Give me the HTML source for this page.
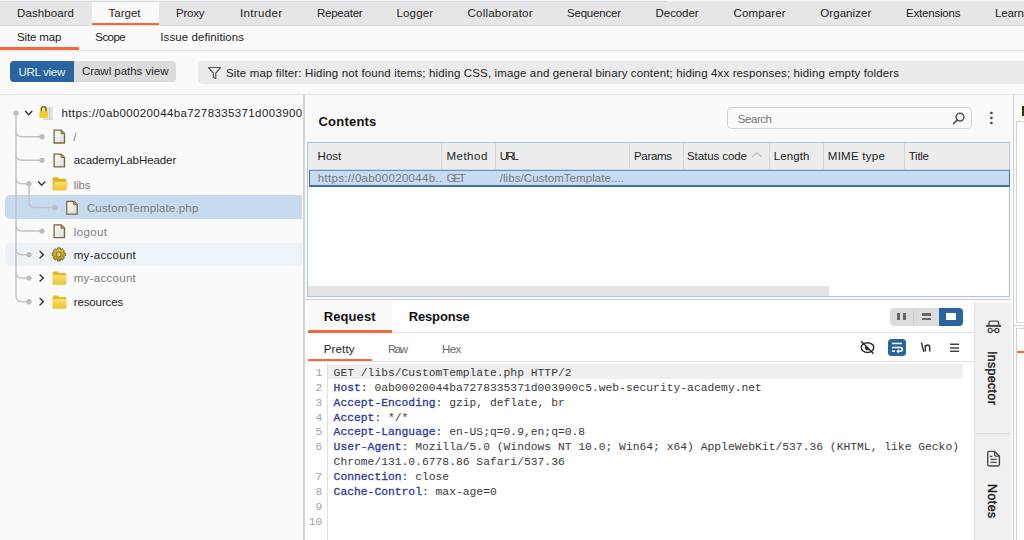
<!DOCTYPE html>
<html><head><meta charset="utf-8"><style>
html,body{margin:0;padding:0;width:1024px;height:540px;overflow:hidden;background:#fafafa;position:relative}
body>div, body>span, body>svg{position:absolute}
div{position:absolute}
.t{position:absolute;white-space:nowrap;font-family:"Liberation Sans",sans-serif}
.m{position:absolute;white-space:pre;font-family:"Liberation Mono",monospace;font-size:11.33px;line-height:11.33px}
</style></head><body>
<div style="left:0px;top:0px;width:1024px;height:25px;background:#e6e6e6"></div>
<div style="left:0px;top:0px;width:1024px;height:1px;background:#f3f4f6"></div>
<div style="left:0px;top:1px;width:667px;height:1px;background:#d6dde7"></div>
<div style="left:667px;top:1px;width:357px;height:1px;background:#eeeff0"></div>
<div style="left:92px;top:2px;width:67px;height:23px;background:#fafafa"></div>
<div style="left:92px;top:22.5px;width:67px;height:2px;background:#f8693a"></div>
<div style="left:0px;top:25px;width:1024px;height:1px;background:#dedede"></div>
<span class="t" style="left:17.00px;top:8.27px;font-size:11.5px;line-height:11.5px;color:#222;letter-spacing:0.094px;">Dashboard</span>
<span class="t" style="left:108.50px;top:8.27px;font-size:11.5px;line-height:11.5px;color:#222;letter-spacing:0.010px;">Target</span>
<span class="t" style="left:176.00px;top:8.27px;font-size:11.5px;line-height:11.5px;color:#222;letter-spacing:-0.250px;">Proxy</span>
<span class="t" style="left:240.00px;top:8.27px;font-size:11.5px;line-height:11.5px;color:#222;letter-spacing:0.339px;">Intruder</span>
<span class="t" style="left:317.00px;top:8.27px;font-size:11.5px;line-height:11.5px;color:#222;letter-spacing:-0.243px;">Repeater</span>
<span class="t" style="left:396.50px;top:8.27px;font-size:11.5px;line-height:11.5px;color:#222;letter-spacing:0.160px;">Logger</span>
<span class="t" style="left:467.50px;top:8.27px;font-size:11.5px;line-height:11.5px;color:#222;letter-spacing:0.214px;">Collaborator</span>
<span class="t" style="left:567.00px;top:8.27px;font-size:11.5px;line-height:11.5px;color:#222;letter-spacing:-0.203px;">Sequencer</span>
<span class="t" style="left:655.60px;top:8.27px;font-size:11.5px;line-height:11.5px;color:#222;letter-spacing:-0.079px;">Decoder</span>
<span class="t" style="left:733.50px;top:8.27px;font-size:11.5px;line-height:11.5px;color:#222;letter-spacing:0.125px;">Comparer</span>
<span class="t" style="left:820.30px;top:8.27px;font-size:11.5px;line-height:11.5px;color:#222;letter-spacing:0.062px;">Organizer</span>
<span class="t" style="left:906.00px;top:8.27px;font-size:11.5px;line-height:11.5px;color:#222;letter-spacing:-0.206px;">Extensions</span>
<span class="t" style="left:995.00px;top:8.27px;font-size:11.5px;line-height:11.5px;color:#222;letter-spacing:-0.106px;">Learn</span>
<div style="left:0px;top:26px;width:1024px;height:69px;background:#fafafa"></div>
<div style="left:0px;top:50px;width:1024px;height:1px;background:#e2e4e4"></div>
<div style="left:0px;top:47.2px;width:79px;height:2.6px;background:#f8693a"></div>
<span class="t" style="left:17.00px;top:32.27px;font-size:11.5px;line-height:11.5px;color:#222;letter-spacing:-0.139px;">Site map</span>
<span class="t" style="left:95.30px;top:32.27px;font-size:11.5px;line-height:11.5px;color:#222;letter-spacing:-0.575px;">Scope</span>
<span class="t" style="left:160.30px;top:32.27px;font-size:11.5px;line-height:11.5px;color:#222;letter-spacing:0.080px;">Issue definitions</span>
<div style="left:10.2px;top:61px;width:166.3px;height:20.5px;background:#dcdcdc;border-radius:4px"></div>
<div style="left:10.2px;top:61px;width:63.8px;height:20.5px;background:#2a64a0;border-radius:4px 0 0 4px"></div>
<span class="t" style="left:18.50px;top:66.57px;font-size:11.5px;line-height:11.5px;color:#eef2f7;letter-spacing:-0.296px;">URL view</span>
<span class="t" style="left:81.90px;top:66.27px;font-size:11.5px;line-height:11.5px;color:#2a2a2a;letter-spacing:-0.025px;">Crawl paths view</span>
<div style="left:198px;top:61px;width:826px;height:22.5px;background:#ebebeb;border-radius:5px 0 0 5px"></div>
<svg style="position:absolute;left:207px;top:66px" width="16" height="14" viewBox="0 0 16 14"><path d="M1.5 1.5 H13.5 L8.8 7.2 V12.5 L6.4 11.2 V7.2 Z" fill="none" stroke="#555" stroke-width="1.2" stroke-linejoin="round"/></svg>
<span class="t" style="left:226.00px;top:68.27px;font-size:11.5px;line-height:11.5px;color:#222;letter-spacing:0.134px;">Site map filter: Hiding not found items; hiding CSS, image and general binary content; hiding 4xx responses; hiding empty folders</span>
<div style="left:0px;top:94px;width:1024px;height:1px;background:#e4e4e4"></div>
<div style="left:0px;top:95px;width:303px;height:445px;background:#fafafa"></div>
<div style="left:5px;top:195px;width:296.7px;height:24px;background:#c8daf0;border-radius:5px 0 0 5px"></div>
<div style="left:5px;top:243px;width:296.7px;height:22.5px;background:#eef3fa;border-radius:5px 0 0 5px"></div>
<svg style="position:absolute;left:0;top:0" width="303" height="540" viewBox="0 0 303 540"><defs><linearGradient id="fg" x1="0" y1="0" x2="1" y2="1"><stop offset="0" stop-color="#ffffff"/><stop offset="1" stop-color="#d8d8d8"/></linearGradient><linearGradient id="fo" x1="0" y1="0" x2="0" y2="1"><stop offset="0" stop-color="#fbe07a"/><stop offset="1" stop-color="#eec22a"/></linearGradient><linearGradient id="gg" x1="0" y1="0" x2="0" y2="1"><stop offset="0" stop-color="#dcc458"/><stop offset="1" stop-color="#a88c22"/></linearGradient></defs><path d="M16 113 V295.7 Q16 301.7 22 301.7 H29" fill="none" stroke="#c3c3c3" stroke-width="1.5"/><path d="M16 130.7 Q16 136.7 22 136.7 H42" fill="none" stroke="#c3c3c3" stroke-width="1.5"/><path d="M16 154.3 Q16 160.3 22 160.3 H42" fill="none" stroke="#c3c3c3" stroke-width="1.5"/><path d="M16 225.1 Q16 231.1 22 231.1 H42" fill="none" stroke="#c3c3c3" stroke-width="1.5"/><path d="M16 177.7 Q16 183.7 22 183.7 H29" fill="none" stroke="#c3c3c3" stroke-width="1.5"/><path d="M16 248.7 Q16 254.7 22 254.7 H29" fill="none" stroke="#c3c3c3" stroke-width="1.5"/><path d="M16 272 Q16 278 22 278 H29" fill="none" stroke="#c3c3c3" stroke-width="1.5"/><path d="M29 183.7 V201.6 Q29 207.6 35 207.6 H54.7" fill="none" stroke="#c3c3c3" stroke-width="1.5"/><circle cx="16" cy="113" r="2.6" fill="#bdbdbd"/><circle cx="42" cy="136.7" r="2.6" fill="#bdbdbd"/><circle cx="42" cy="160.3" r="2.6" fill="#bdbdbd"/><circle cx="29" cy="183.7" r="2.6" fill="#bdbdbd"/><circle cx="54.7" cy="207.6" r="2.6" fill="#bdbdbd"/><circle cx="42" cy="231.1" r="2.6" fill="#bdbdbd"/><circle cx="29" cy="254.7" r="2.6" fill="#bdbdbd"/><circle cx="29" cy="278" r="2.6" fill="#bdbdbd"/><circle cx="29" cy="301.7" r="2.6" fill="#bdbdbd"/><path d="M25.2 111 L28.7 114.8 L32.2 111" fill="none" stroke="#333" stroke-width="1.4"/><path d="M38.2 181.5 L41.7 185.3 L45.2 181.5" fill="none" stroke="#333" stroke-width="1.4"/><path d="M39.6 251.1 L43.4 254.7 L39.6 258.3" fill="none" stroke="#333" stroke-width="1.4"/><path d="M39.6 274.4 L43.4 278 L39.6 281.6" fill="none" stroke="#333" stroke-width="1.4"/><path d="M39.6 298.09999999999997 L43.4 301.7 L39.6 305.3" fill="none" stroke="#333" stroke-width="1.4"/><g transform="translate(53.3,129.4)"><defs></defs><path d="M0.8 0.8 H8 L11.2 4 V13.6 H0.8 Z" fill="url(#fg)" stroke="#7a6a3a" stroke-width="1.3" stroke-linejoin="miter"/><path d="M7.8 0.8 V4.2 H11.2" fill="#b8a060" stroke="#7a6a3a" stroke-width="1"/></g><g transform="translate(53.3,153.3)"><defs></defs><path d="M0.8 0.8 H8 L11.2 4 V13.6 H0.8 Z" fill="url(#fg)" stroke="#7a6a3a" stroke-width="1.3" stroke-linejoin="miter"/><path d="M7.8 0.8 V4.2 H11.2" fill="#b8a060" stroke="#7a6a3a" stroke-width="1"/></g><g transform="translate(52.2,176.7)"><path d="M0.5 1.5 Q0.5 0.5 1.5 0.5 H5.5 L7 2 H13 Q14 2 14 3 V13.5 H0.5 Z" fill="#e0b020"/><path d="M2.5 5 H16 L14 13.5 H0.5 Z" fill="url(#fo)"/></g><g transform="translate(66,200.6)"><defs></defs><path d="M0.8 0.8 H8 L11.2 4 V13.6 H0.8 Z" fill="url(#fg)" stroke="#7a6a3a" stroke-width="1.3" stroke-linejoin="miter"/><path d="M7.8 0.8 V4.2 H11.2" fill="#b8a060" stroke="#7a6a3a" stroke-width="1"/></g><g transform="translate(53.3,224)"><defs></defs><path d="M0.8 0.8 H8 L11.2 4 V13.6 H0.8 Z" fill="url(#fg)" stroke="#7a6a3a" stroke-width="1.3" stroke-linejoin="miter"/><path d="M7.8 0.8 V4.2 H11.2" fill="#b8a060" stroke="#7a6a3a" stroke-width="1"/></g><g transform="translate(52.2,271.1)"><path d="M0.5 1.5 Q0.5 0.5 1.5 0.5 H5.5 L7 2 H13 Q14 2 14 3 V13.5 H0.5 Z" fill="#e8b820"/><path d="M0.5 4 H14 V13.5 H0.5 Z" fill="url(#fo)"/></g><g transform="translate(52.2,295)"><path d="M0.5 1.5 Q0.5 0.5 1.5 0.5 H5.5 L7 2 H13 Q14 2 14 3 V13.5 H0.5 Z" fill="#e8b820"/><path d="M0.5 4 H14 V13.5 H0.5 Z" fill="url(#fo)"/></g><g transform="translate(58.8,254.4)"><polygon points="4.68,-1.76 6.54,-1.46 6.54,1.46 4.68,1.76 4.55,2.06 5.66,3.59 3.59,5.66 2.06,4.55 1.76,4.68 1.46,6.54 -1.46,6.54 -1.76,4.68 -2.06,4.55 -3.59,5.66 -5.66,3.59 -4.55,2.06 -4.68,1.76 -6.54,1.46 -6.54,-1.46 -4.68,-1.76 -4.55,-2.06 -5.66,-3.59 -3.59,-5.66 -2.06,-4.55 -1.76,-4.68 -1.46,-6.54 1.46,-6.54 1.76,-4.68 2.06,-4.55 3.59,-5.66 5.66,-3.59 4.55,-2.06" fill="url(#gg)" stroke="#7e6812" stroke-width="0.9" stroke-linejoin="round"/><circle r="2.4" fill="#dcc870" stroke="#9a8020" stroke-width="1.1"/></g><g transform="translate(39.4,106)"><rect x="3.6" y="1.1" width="9.8" height="12.7" fill="#e3e3e3"/><rect x="9.6" y="1.1" width="1.3" height="12.7" fill="#cdcdcd"/><rect x="3.6" y="12.8" width="9.8" height="1" fill="#d6d6d6"/><path d="M1.9 5.6 V3.6 Q1.9 0.6 4.3 0.6 Q6.7 0.6 6.7 3.6 V5.6" fill="none" stroke="#8e7818" stroke-width="1.9"/><rect x="0" y="5" width="8.6" height="6.8" rx="0.8" fill="#f4cb26"/></g></svg>
<div style="position:absolute;left:0;top:95px;width:302px;height:30px;overflow:hidden">
<span class="t" style="left:61.50px;top:13.27px;font-size:11.5px;line-height:11.5px;color:#1e1e1e;letter-spacing:0.387px;">https://0ab00020044ba7278335371d003900</span>
</div>
<span class="t" style="left:73.30px;top:131.97px;font-size:11.5px;line-height:11.5px;color:#7d7d7d;">/</span>
<span class="t" style="left:73.70px;top:155.37px;font-size:11.5px;line-height:11.5px;color:#1e1e1e;letter-spacing:-0.065px;">academyLabHeader</span>
<span class="t" style="left:73.75px;top:179.67px;font-size:11.5px;line-height:11.5px;color:#7d7d7d;letter-spacing:-0.167px;">libs</span>
<span class="t" style="left:86.90px;top:202.87px;font-size:11.5px;line-height:11.5px;color:#7d7d7d;letter-spacing:0.160px;">CustomTemplate.php</span>
<span class="t" style="left:73.75px;top:226.77px;font-size:11.5px;line-height:11.5px;color:#7d7d7d;letter-spacing:0.365px;">logout</span>
<span class="t" style="left:73.75px;top:249.87px;font-size:11.5px;line-height:11.5px;color:#1e1e1e;letter-spacing:0.286px;">my-account</span>
<span class="t" style="left:73.75px;top:273.27px;font-size:11.5px;line-height:11.5px;color:#7d7d7d;letter-spacing:0.286px;">my-account</span>
<span class="t" style="left:73.75px;top:296.97px;font-size:11.5px;line-height:11.5px;color:#1e1e1e;letter-spacing:-0.125px;">resources</span>
<div style="left:303px;top:95px;width:2px;height:445px;background:#d6d6d6"></div>
<div style="left:305px;top:95px;width:708px;height:445px;background:#fafafa"></div>
<span class="t" style="left:318.50px;top:114.90px;font-size:13px;line-height:13px;color:#111;font-weight:bold;letter-spacing:0.211px;">Contents</span>
<div style="left:727.4px;top:107.4px;width:244px;height:21.5px;"></div>
<div style="position:absolute;left:727px;top:107px;width:244.5px;height:22.3px;border:1px solid #d0d0d0;border-bottom:1.6px solid #d4d4d4;border-radius:5px;background:#fafafa;box-sizing:border-box"></div>
<span class="t" style="left:737.80px;top:113.77px;font-size:11.5px;line-height:11.5px;color:#777;letter-spacing:-0.445px;">Search</span>
<svg style="position:absolute;left:950px;top:108px" width="20" height="20" viewBox="0 0 20 20"><circle cx="10" cy="9.1" r="3.9" fill="none" stroke="#555" stroke-width="1.5"/><path d="M7.3 11.9 L3.6 15.6" stroke="#555" stroke-width="1.6" stroke-linecap="round"/></svg>
<svg style="position:absolute;left:985px;top:108px" width="12" height="20" viewBox="985 108 12 20"><circle cx="991.4" cy="113" r="1.35" fill="#4a4a4a"/><circle cx="991.4" cy="118" r="1.35" fill="#4a4a4a"/><circle cx="991.4" cy="123" r="1.35" fill="#4a4a4a"/></svg>
<div style="position:absolute;left:307px;top:141.5px;width:703px;height:155px;border:1px solid #a9c5e4;box-sizing:border-box;background:#fff"></div>
<div style="left:308px;top:142.5px;width:701px;height:27px;background:#ededed"></div>
<div style="left:308px;top:169px;width:701px;height:1px;background:#c9d3df"></div>
<div style="left:441px;top:143px;width:1px;height:26px;background:#d8d8d8"></div>
<div style="left:495px;top:143px;width:1px;height:26px;background:#d8d8d8"></div>
<div style="left:629px;top:143px;width:1px;height:26px;background:#d8d8d8"></div>
<div style="left:683px;top:143px;width:1px;height:26px;background:#d8d8d8"></div>
<div style="left:769px;top:143px;width:1px;height:26px;background:#d8d8d8"></div>
<div style="left:823px;top:143px;width:1px;height:26px;background:#d8d8d8"></div>
<div style="left:904px;top:143px;width:1px;height:26px;background:#d8d8d8"></div>
<span class="t" style="left:317.60px;top:150.67px;font-size:11.5px;line-height:11.5px;color:#222;">Host</span>
<span class="t" style="left:446.40px;top:150.67px;font-size:11.5px;line-height:11.5px;color:#222;letter-spacing:0.510px;">Method</span>
<span class="t" style="left:499.70px;top:150.67px;font-size:11.5px;line-height:11.5px;color:#222;letter-spacing:-1.850px;">URL</span>
<span class="t" style="left:634.00px;top:150.67px;font-size:11.5px;line-height:11.5px;color:#222;letter-spacing:-0.305px;">Params</span>
<span class="t" style="left:687.00px;top:150.67px;font-size:11.5px;line-height:11.5px;color:#222;letter-spacing:-0.073px;">Status code</span>
<span class="t" style="left:773.80px;top:150.67px;font-size:11.5px;line-height:11.5px;color:#222;letter-spacing:0.085px;">Length</span>
<span class="t" style="left:827.80px;top:150.67px;font-size:11.5px;line-height:11.5px;color:#222;letter-spacing:0.269px;">MIME type</span>
<span class="t" style="left:908.80px;top:150.67px;font-size:11.5px;line-height:11.5px;color:#222;letter-spacing:-0.275px;">Title</span>
<svg style="position:absolute;left:750px;top:150px" width="14" height="9" viewBox="0 0 14 9"><path d="M2 7 L7 2.5 L12 7" fill="none" stroke="#c0c0c0" stroke-width="1.2"/></svg>
<div style="position:absolute;left:308.5px;top:170px;width:701px;height:16.7px;background:#c8daf0;border:1px solid #3d6fa8;border-top-color:#6d93c0;border-bottom-width:2px;box-sizing:border-box"></div>
<span class="t" style="left:317.80px;top:173.27px;font-size:11.5px;line-height:11.5px;color:#7a7a7a;letter-spacing:0.321px;">https://0ab00020044b..</span>
<span class="t" style="left:446.40px;top:173.27px;font-size:11.5px;line-height:11.5px;color:#7a7a7a;letter-spacing:-2.175px;">GET</span>
<span class="t" style="left:499.70px;top:173.27px;font-size:11.5px;line-height:11.5px;color:#7a7a7a;letter-spacing:0.070px;">/libs/CustomTemplate....</span>
<div style="left:308px;top:285.6px;width:521px;height:10px;background:#e3e3e3"></div>
<div style="left:305px;top:299px;width:706px;height:1px;background:#cfcfcf"></div>
<div style="left:305px;top:300px;width:669px;height:240px;background:#ffffff"></div>
<div style="left:307.5px;top:302px;width:84.5px;height:30px;background:#f9f9f9"></div>
<div style="left:307.5px;top:332px;width:667px;height:1px;background:#e2e2e2"></div>
<div style="left:307.5px;top:330px;width:84.5px;height:2.5px;background:#f8693a"></div>
<span class="t" style="left:323.70px;top:310.30px;font-size:13px;line-height:13px;color:#111;font-weight:bold;letter-spacing:0.100px;">Request</span>
<span class="t" style="left:408.80px;top:310.30px;font-size:13px;line-height:13px;color:#111;font-weight:bold;letter-spacing:-0.175px;">Response</span>
<div style="position:absolute;left:889.6px;top:307.8px;width:73.4px;height:18px;border-radius:4px;background:#dcdcdc;overflow:hidden"><div style="position:absolute;left:23.6px;top:0;width:1px;height:18px;background:#cfcfcf"></div><div style="position:absolute;left:49.5px;top:0;width:24px;height:18px;background:#2a64a0"></div></div>
<div style="left:897.1px;top:313.2px;width:3px;height:7.3px;background:#666"></div>
<div style="left:903.4px;top:313.2px;width:3px;height:7.3px;background:#666"></div>
<div style="left:922px;top:313.2px;width:9px;height:2.4px;background:#666"></div>
<div style="left:922px;top:317.9px;width:9px;height:2.4px;background:#666"></div>
<div style="left:946.4px;top:312.7px;width:9.6px;height:7.8px;background:#fff"></div>
<div style="left:307.5px;top:361px;width:667px;height:1px;background:#e2e2e2"></div>
<div style="left:307.5px;top:359px;width:64.2px;height:2.3px;background:#f8693a"></div>
<span class="t" style="left:323.70px;top:343.87px;font-size:11.5px;line-height:11.5px;color:#222;letter-spacing:0.155px;">Pretty</span>
<span class="t" style="left:387.90px;top:343.87px;font-size:11.5px;line-height:11.5px;color:#666;letter-spacing:-1.475px;">Raw</span>
<span class="t" style="left:442.00px;top:343.87px;font-size:11.5px;line-height:11.5px;color:#666;letter-spacing:-0.575px;">Hex</span>
<svg style="position:absolute;left:858px;top:338px" width="20" height="20" viewBox="0 0 20 20"><ellipse cx="9.5" cy="9.6" rx="6.3" ry="4.9" fill="none" stroke="#2a2a2a" stroke-width="1.35"/><path d="M7.6 7.8 A2.5 2.5 0 0 0 11.2 11.4 Z" fill="#2a2a2a"/><path d="M3.2 3.3 L15.6 15.7" stroke="#2a2a2a" stroke-width="1.4"/></svg>
<div style="position:absolute;left:887.5px;top:338.6px;width:18px;height:17px;border-radius:3.5px;background:#2a64a0"></div>
<svg style="position:absolute;left:887.5px;top:338.6px" width="18" height="17" viewBox="0 0 18 17"><path d="M4 4.5 H14" stroke="#fff" stroke-width="1.5"/><path d="M4 8.5 H12.5 Q14.3 8.5 14.3 10.3 Q14.3 12.2 12.5 12.2 H9.5" fill="none" stroke="#fff" stroke-width="1.5"/><path d="M10.8 10.6 L9.2 12.2 L10.8 13.8" fill="none" stroke="#fff" stroke-width="1.2"/><path d="M4 12.2 H7" stroke="#fff" stroke-width="1.5"/></svg>
<svg style="position:absolute;left:912px;top:334px" width="55" height="26" viewBox="912 334 55 26"><path d="M921.6 343.2 L923.7 351.4" stroke="#333" stroke-width="1.45" stroke-linecap="round"/><path d="M925.3 345.1 V351.6 M925.3 347.5 Q925.8 345 927.6 345 Q929.7 345 929.7 347.7 V351.6" fill="none" stroke="#333" stroke-width="1.45"/><path d="M950 344.2 H959 M950 347.9 H959 M950 351.3 H959" stroke="#444" stroke-width="1.45"/></svg>
<div style="left:326.5px;top:362px;width:1px;height:178px;background:#e0e0e0"></div>
<div style="left:327.5px;top:363.7px;width:635.5px;height:15.6px;background:#efefef"></div>
<div class="m" style="left:333.6px;top:367.61px"><span style="color:#3a3a3a;">GET /libs/CustomTemplate.php HTTP/2</span></div>
<div class="m" style="left:315.50px;top:367.61px;color:#a4a4a4">1</div>
<div class="m" style="left:333.6px;top:382.58px"><span style="color:#2f3a9c;-webkit-text-stroke:0.3px #2f3a9c;">Host</span><span style="color:#3a3a3a;">: 0ab00020044ba7278335371d003900c5.web-security-academy.net</span></div>
<div class="m" style="left:315.50px;top:382.58px;color:#a4a4a4">2</div>
<div class="m" style="left:333.6px;top:397.55px"><span style="color:#2f3a9c;-webkit-text-stroke:0.3px #2f3a9c;">Accept-Encoding</span><span style="color:#3a3a3a;">: gzip, deflate, br</span></div>
<div class="m" style="left:315.50px;top:397.55px;color:#a4a4a4">3</div>
<div class="m" style="left:333.6px;top:412.52px"><span style="color:#2f3a9c;-webkit-text-stroke:0.3px #2f3a9c;">Accept</span><span style="color:#3a3a3a;">: */*</span></div>
<div class="m" style="left:315.50px;top:412.52px;color:#a4a4a4">4</div>
<div class="m" style="left:333.6px;top:427.49px"><span style="color:#2f3a9c;-webkit-text-stroke:0.3px #2f3a9c;">Accept-Language</span><span style="color:#3a3a3a;">: en-US;q=0.9,en;q=0.8</span></div>
<div class="m" style="left:315.50px;top:427.49px;color:#a4a4a4">5</div>
<div class="m" style="left:333.6px;top:442.46px"><span style="color:#2f3a9c;-webkit-text-stroke:0.3px #2f3a9c;">User-Agent</span><span style="color:#3a3a3a;">: Mozilla/5.0 (Windows NT 10.0; Win64; x64) AppleWebKit/537.36 (KHTML, like Gecko)</span></div>
<div class="m" style="left:315.50px;top:442.46px;color:#a4a4a4">6</div>
<div class="m" style="left:333.6px;top:457.43px"><span style="color:#3a3a3a;">Chrome/131.0.6778.86 Safari/537.36</span></div>
<div class="m" style="left:333.6px;top:472.40px"><span style="color:#2f3a9c;-webkit-text-stroke:0.3px #2f3a9c;">Connection</span><span style="color:#3a3a3a;">: close</span></div>
<div class="m" style="left:315.50px;top:472.40px;color:#a4a4a4">7</div>
<div class="m" style="left:333.6px;top:487.37px"><span style="color:#2f3a9c;-webkit-text-stroke:0.3px #2f3a9c;">Cache-Control</span><span style="color:#3a3a3a;">: max-age=0</span></div>
<div class="m" style="left:315.50px;top:487.37px;color:#a4a4a4">8</div>
<div class="m" style="left:315.50px;top:502.34px;color:#a4a4a4">9</div>
<div class="m" style="left:308.70px;top:517.31px;color:#a4a4a4">10</div>
<div style="left:974.3px;top:302.5px;width:37px;height:237.5px;background:#f1f0f0"></div>
<div style="left:974.3px;top:302.5px;width:1px;height:237.5px;background:#e2e2e2"></div>
<div style="left:975px;top:433px;width:35px;height:1px;background:#dcdcdc"></div>
<svg style="position:absolute;left:985px;top:318px" width="17" height="17" viewBox="0 0 17 17"><path d="M4 7.6 V4.8 Q4 3.1 5.7 3.1 H11.9 Q13.6 3.1 13.6 4.8 V7.6" fill="none" stroke="#484848" stroke-width="1.4"/><path d="M1.1 7.9 H16.1" stroke="#484848" stroke-width="2"/><circle cx="5.2" cy="12.5" r="2.05" fill="none" stroke="#484848" stroke-width="1.3"/><circle cx="11.9" cy="12.5" r="2.05" fill="none" stroke="#484848" stroke-width="1.3"/><path d="M7.2 12.5 H9.9" stroke="#484848" stroke-width="1.1"/></svg>
<div class="t" style="left:998px;top:351px;font-size:12.4px;line-height:12px;-webkit-text-stroke:0.4px #1a1a1a;color:#1a1a1a;letter-spacing:0.35px;transform-origin:0 0;transform:rotate(90deg);white-space:nowrap">Inspector</div>
<svg style="position:absolute;left:986px;top:450px" width="16" height="18" viewBox="0 0 16 18"><path d="M3.3 1.4 H8.6 L13.4 6.2 V14.3 Q13.4 16 11.7 16 H3.3 Q1.7 16 1.7 14.3 V3.1 Q1.7 1.4 3.3 1.4 Z" fill="none" stroke="#4a4a4a" stroke-width="1.4"/><path d="M8.6 1.4 V4.5 Q8.6 6.2 10.3 6.2 H13.4" fill="none" stroke="#4a4a4a" stroke-width="1.3"/><path d="M3.6 6.3 H6.4 M4.4 9.3 H10.8 M4.4 12.3 H10.8" stroke="#555" stroke-width="1.3"/></svg>
<div class="t" style="left:997.8px;top:483.5px;font-size:12.4px;line-height:12px;-webkit-text-stroke:0.4px #1a1a1a;color:#1a1a1a;letter-spacing:0.45px;transform-origin:0 0;transform:rotate(90deg);white-space:nowrap">Notes</div>
<div style="left:1011.5px;top:95px;width:1.3px;height:445px;background:#ffffff"></div>
<div style="left:1012.5px;top:95px;width:1.5px;height:445px;background:#cfcfcf"></div>
<div style="left:1014px;top:95px;width:10px;height:445px;background:#fafafa"></div>
<div style="left:1022.3px;top:106px;width:2px;height:9.6px;background:#3a2a10"></div>
<div style="left:1016.2px;top:121.2px;width:8px;height:200px;background:#fff;border-left:1px solid #cfcfcf;border-top:1px solid #cfcfcf;border-bottom:1px solid #d8d8d8"></div>
<div style="left:1014px;top:324.5px;width:10px;height:1px;background:#d8d8d8"></div>
<div style="left:1016.2px;top:328.3px;width:8px;height:212px;background:#fff;border-left:1px solid #cfcfcf;border-top:1px solid #d8d8d8"></div>
<div style="left:1017px;top:351.3px;width:7px;height:1.8px;background:#f8693a"></div>
</body></html>
